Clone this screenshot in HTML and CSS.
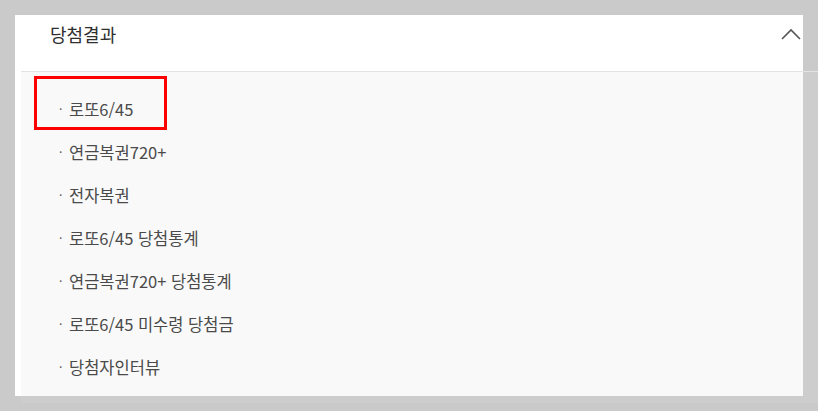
FILE: index.html
```html
<!DOCTYPE html>
<html lang="ko">
<head>
<meta charset="utf-8">
<title>당첨결과</title>
<link rel="stylesheet" href="styles.css">
</head>
<body>
<div class="panel">
  <div class="header">
    <h2 class="title">당첨결과</h2>
    <svg class="chevron" width="20" height="12" viewBox="0 0 20 12" aria-hidden="true">
      <polyline points="1,11 10,2 19,11" fill="none" stroke="#555" stroke-width="1.6"/>
    </svg>
  </div>
  <ul class="list">
    <li class="item"><span class="dot">·</span>로또6/45</li>
    <li class="item"><span class="dot">·</span>연금복권720+</li>
    <li class="item"><span class="dot">·</span>전자복권</li>
    <li class="item"><span class="dot">·</span>로또6/45 당첨통계</li>
    <li class="item"><span class="dot">·</span>연금복권720+ 당첨통계</li>
    <li class="item"><span class="dot">·</span>로또6/45 미수령 당첨금</li>
    <li class="item"><span class="dot">·</span>당첨자인터뷰</li>
  </ul>
  <div class="highlight"></div>
</div>
<div class="band"></div>
</body>
</html>
```

FILE: styles.css
```css
html, body {
  margin: 0;
  padding: 0;
}
body {
  background: #cacaca;
  padding: 15px 0 0 15px;
  font-family: "Noto Sans CJK KR", "Noto Sans", sans-serif;
  overflow: hidden;
  height: 396px;
}
.panel {
  position: relative;
  width: 788px;
  background: #ffffff;
}
.header {
  height: 56px;
  display: flex;
  justify-content: space-between;
  align-items: flex-start;
  padding: 0 2px 0 35px;
  box-sizing: border-box;
}
.title {
  margin: 0;
  padding-top: 6px;
  font-size: 18px;
  line-height: 26px;
  font-weight: 400;
  color: #2f2f2f;
}
.chevron {
  margin-top: 13px;
  display: block;
}
.list {
  list-style: none;
  margin: 0 -15px 0 6px;
  padding: 15px 0 8px 0;
  border-top: 1px solid #e3e3e3;
  background: linear-gradient(to right, #f9f9f9 782px, #cdcdcd 782px);
}
.item {
  display: flex;
  align-items: center;
  height: 43px;
  padding-left: 38px;
  font-size: 16.5px;
  color: #4a4a4a;
}
.dot {
  width: 10px;
  font-size: 12px;
  color: #555555;
}
.highlight {
  position: absolute;
  left: 19px;
  top: 61px;
  width: 127px;
  height: 48px;
  border: 3px solid #ff0000;
}
.band {
  margin-left: 6px;
  height: 7px;
  background: #cdcdcd;
}
```
